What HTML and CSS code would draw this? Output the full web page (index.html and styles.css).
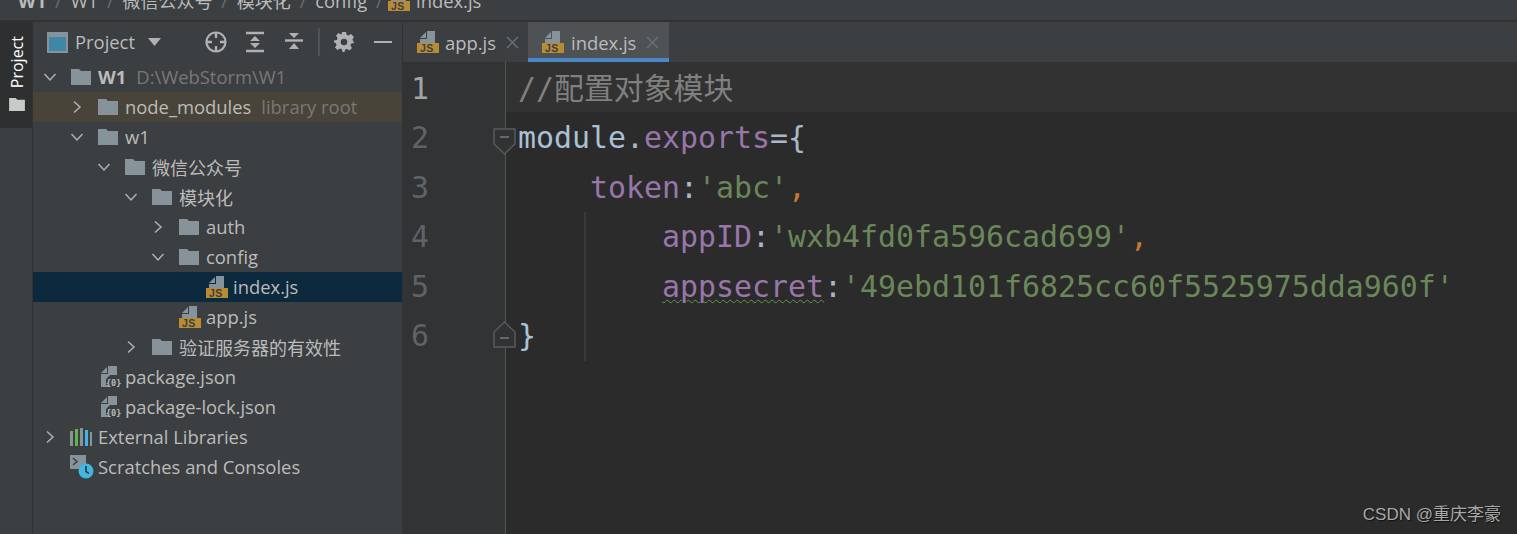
FILE: index.html
```html
<!DOCTYPE html>
<html lang="zh">
<head>
<meta charset="utf-8">
<title>WebStorm</title>
<link rel="stylesheet" href="styles.css">
</head>
<body>
<svg class="defs" width="0" height="0">
  <defs>
    <symbol id="folder" viewBox="0 0 20 16"><path d="M0 0h8l2 2h10v14H0z" fill="#87939a"/></symbol>
    <symbol id="jsfile" viewBox="0 0 22 22"><path d="M3 7l6-6v6z" fill="#87939a"/><path d="M10 0h8v12H3V8h7z" fill="#87939a"/><rect y="12" x="0" width="22" height="10" fill="#b98b35"/><text x="3" y="20.800" class="jslabel">JS</text></symbol>
    <symbol id="jsonfile" viewBox="0 0 22 24"><path d="M1 8l6-6v6z" fill="#87939a"/><path d="M8 1h9v9h-7l-4 4v6h3v2H1V9h7z" fill="#87939a"/><text x="6" y="21" class="jsonlabel">{0}</text></symbol>
    <symbol id="chev-r" viewBox="0 0 16 16"><path d="M5 2.500l6 5.500-6 5.500" fill="none" stroke="#afb1b3" stroke-width="1.500"/></symbol>
    <symbol id="chev-d" viewBox="0 0 16 16"><path d="M2.500 5l5.500 6 5.500-6" fill="none" stroke="#afb1b3" stroke-width="1.500"/></symbol>
    <symbol id="close-x" viewBox="0 0 13 13"><path d="M1 1l11 11M12 1L1 12" stroke="#6e7072" stroke-width="1.400"/></symbol>
  </defs>
</svg>

<nav class="crumbs">
  <div class="crumbs-inner">
    <b class="crumb">W1</b><i class="sep">/</i>
    <span class="crumb">W1</span><i class="sep">/</i>
    <span class="crumb cjk">微信公众号</span><i class="sep">/</i>
    <span class="crumb cjk">模块化</span><i class="sep">/</i>
    <span class="crumb">config</span><i class="sep">/</i>
    <svg class="crumb-icon"><use href="#jsfile"/></svg>
    <span class="crumb">index.js</span>
  </div>
</nav>

<main class="workspace">
  <aside class="stripe">
    <div class="stripe-tab">
      <span class="stripe-label">Project</span>
      <svg class="stripe-folder" viewBox="0 0 17 14"><path d="M0 0h7l2 2h8v12H0z" fill="#c9c9c9"/></svg>
    </div>
  </aside>

  <section class="project">
    <header class="project-head">
      <svg class="head-window" viewBox="0 0 21 21"><rect x="1" y="1" width="19" height="19" fill="#3f87a6" stroke="#87939a" stroke-width="2"/><rect x="2" y="2" width="17" height="3" fill="#87939a"/></svg>
      <span class="head-title">Project</span>
      <svg class="head-caret" viewBox="0 0 13 8"><path d="M0 0h13L6.500 8z" fill="#afb1b3"/></svg>
      <svg class="tool tool-first" viewBox="0 0 24 24"><circle cx="12" cy="12" r="9.500" fill="none" stroke="#afb1b3" stroke-width="2.200"/><path d="M12 2v6M12 16v6M2 12h6M16 12h6" stroke="#afb1b3" stroke-width="2.400"/></svg>
      <svg class="tool" viewBox="0 0 20 24"><path d="M1 3h18M1 21h18" stroke="#afb1b3" stroke-width="2.400"/><path d="M10 6l5 5H5zM10 18l5-5H5z" fill="#afb1b3"/></svg>
      <svg class="tool" viewBox="0 0 20 24"><path d="M1 10.500h18" stroke="#afb1b3" stroke-width="2.400"/><path d="M10 8L5 3h10zM10 13l5 6H5z" fill="#afb1b3"/></svg>
      <span class="head-divider"></span>
      <svg class="tool tool-gear" viewBox="0 0 20 20"><path d="M8 0h4l.6 2.800 1.900.8L17 2l3 3-1.600 2.500.8 1.900L20 10v1l-2.800.6-.8 1.900L18 16l-2.500 2.500-2.500-1.600-1.900.8L10.500 20h-2l-.6-2.800-1.900-.8L3.500 18 1 15.500l1.600-2.500-.8-1.900L0 10.500v-2l2.800-.6.800-1.900L2 3.500 4.500 1 7 2.600l.7-.3z" fill="#afb1b3"/><circle cx="10" cy="10" r="3.300" fill="#3c3f41"/></svg>
      <span class="head-minus"></span>
    </header>

    <ul class="tree">
      <li class="row l0"><svg class="chev"><use href="#chev-d"/></svg><svg class="ico"><use href="#folder"/></svg><b class="name">W1</b><span class="hint">D:\WebStorm\W1</span></li>
      <li class="row l1 lib"><svg class="chev"><use href="#chev-r"/></svg><svg class="ico"><use href="#folder"/></svg><span class="name">node_modules</span><span class="hint">library root</span></li>
      <li class="row l1"><svg class="chev"><use href="#chev-d"/></svg><svg class="ico"><use href="#folder"/></svg><span class="name">w1</span></li>
      <li class="row l2"><svg class="chev"><use href="#chev-d"/></svg><svg class="ico"><use href="#folder"/></svg><span class="name cjk">微信公众号</span></li>
      <li class="row l3"><svg class="chev"><use href="#chev-d"/></svg><svg class="ico"><use href="#folder"/></svg><span class="name cjk">模块化</span></li>
      <li class="row l4"><svg class="chev"><use href="#chev-r"/></svg><svg class="ico"><use href="#folder"/></svg><span class="name">auth</span></li>
      <li class="row l4"><svg class="chev"><use href="#chev-d"/></svg><svg class="ico"><use href="#folder"/></svg><span class="name">config</span></li>
      <li class="row l5 selected"><span class="chev"></span><svg class="file"><use href="#jsfile"/></svg><span class="name">index.js</span></li>
      <li class="row l4"><span class="chev"></span><svg class="file"><use href="#jsfile"/></svg><span class="name">app.js</span></li>
      <li class="row l3"><svg class="chev"><use href="#chev-r"/></svg><svg class="ico"><use href="#folder"/></svg><span class="name cjk">验证服务器的有效性</span></li>
      <li class="row l1"><span class="chev"></span><svg class="file json"><use href="#jsonfile"/></svg><span class="name">package.json</span></li>
      <li class="row l1"><span class="chev"></span><svg class="file json"><use href="#jsonfile"/></svg><span class="name">package-lock.json</span></li>
      <li class="row l0"><svg class="chev"><use href="#chev-r"/></svg><svg class="ico-lib" viewBox="0 0 22 18"><rect x="0" y="3" width="3" height="15" fill="#87939a"/><rect x="5" y="1" width="3" height="17" fill="#62b543"/><rect x="10" y="0" width="3" height="18" fill="#87939a"/><rect x="15" y="2" width="3" height="16" fill="#40b6e0"/><rect x="20" y="4" width="2" height="14" fill="#87939a"/></svg><span class="name">External Libraries</span></li>
      <li class="row l0"><span class="chev"></span><svg class="ico-scratch" viewBox="0 0 24 24"><path d="M0 0h16v14H0z" fill="#87939a"/><path d="M3 3l4 3.500L3 10" fill="none" stroke="#3c3f41" stroke-width="1.500"/><circle cx="16" cy="16" r="7.500" fill="#40b6e0"/><path d="M16 11v5.500l3 2" fill="none" stroke="#2b2b2b" stroke-width="1.500"/></svg><span class="name">Scratches and Consoles</span></li>
    </ul>
  </section>

  <section class="editor">
    <div class="tabs">
      <div class="tab"><svg class="tab-icon"><use href="#jsfile"/></svg><span>app.js</span><svg class="close"><use href="#close-x"/></svg></div>
      <div class="tab active"><svg class="tab-icon"><use href="#jsfile"/></svg><span>index.js</span><svg class="close"><use href="#close-x"/></svg></div>
    </div>
    <div class="code">
      <div class="line caret"><span class="num bright">1</span><code class="src"><span class="c-comment">//配置对象模块</span></code></div>
      <div class="line"><span class="num">2</span><code class="src"><span class="c-blue">module</span><span class="c-plain">.</span><span class="c-prop">exports</span><span class="c-plain">={</span></code>
        <svg class="fold fold-open" viewBox="0 0 24 28"><path d="M1 1h21v15L11.500 26 1 16z" fill="#303234" stroke="#5a5a5a" stroke-width="1.500"/><path d="M7 9h9" stroke="#7a7a7a" stroke-width="1.500"/></svg>
      </div>
      <div class="line"><span class="num">3</span><code class="src in1"><span class="c-prop">token</span><span class="c-plain">:</span><span class="c-str">'abc'</span><span class="c-kw">,</span></code></div>
      <div class="line"><span class="num">4</span><code class="src in2"><span class="guide"></span><span class="c-prop">appID</span><span class="c-plain">:</span><span class="c-str">'wxb4fd0fa596cad699'</span><span class="c-kw">,</span></code></div>
      <div class="line"><span class="num">5</span><code class="src in2"><span class="guide"></span><span class="c-prop squiggle">appsecret</span><span class="c-plain">:</span><span class="c-str">'49ebd101f6825cc60f5525975dda960f'</span></code></div>
      <div class="line"><span class="num">6</span><code class="src"><span class="guide"></span><span class="c-blue">}</span></code>
        <svg class="fold fold-close" viewBox="0 0 24 28"><path d="M1 27h21V12L11.500 2 1 12z" fill="#303234" stroke="#5a5a5a" stroke-width="1.500"/><path d="M7 18h9" stroke="#7a7a7a" stroke-width="1.500"/></svg>
      </div>
    </div>
  </section>
</main>
<div class="watermark">CSDN @重庆李豪</div>
</body>
</html>
```

FILE: styles.css
```css
* { box-sizing: border-box; }
html, body { margin: 0; height: 100%; overflow: hidden; }
body {
  background: #3c3f41;
  color: #bbbbbb;
  font-family: "Open Sans", "Noto Sans CJK SC", sans-serif;
  font-size: 18.400px;
  position: relative;
}
.defs { position: absolute; }
.jslabel { font: bold 10.500px "Liberation Sans", sans-serif; fill: #3c3f41; letter-spacing: .5px; }
.jsonlabel { font: bold 8.500px "DejaVu Sans Mono", monospace; fill: #b4bbc0; }
.cjk { font-size: 18px; }

.crumbs { height: 22px; overflow: hidden; border-bottom: 2px solid #323232; padding-left: 18px; }
.crumbs-inner { display: flex; align-items: center; height: 20px; margin-top: -10px; white-space: nowrap; }
.crumb { color: #bbbbbb; }
.sep { font-style: normal; color: #6a6d6f; margin: 0 8.800px; }
.crumb-icon { width: 22px; height: 22px; margin-left: -3.500px; margin-right: 6px; flex: none; }

.workspace { display: flex; height: 512px; }

.stripe { width: 33px; flex: none; border-right: 1px solid #323232; background: #3c3f41; }
.stripe-tab { height: 106px; width: 32px; background: #2d2f30; display: flex; flex-direction: column; align-items: center; padding: 14px 0 0 2px; }
.stripe-label { writing-mode: vertical-rl; transform: rotate(180deg); color: #ffffff; font-size: 16px; line-height: 20px; }
.stripe-folder { width: 16px; height: 13px; margin-top: 10px; }

.project { width: 370px; flex: none; border-right: 1px solid #323232; }
.project-head { height: 40px; display: flex; align-items: center; padding-left: 14px; }
.head-window { width: 21px; height: 21px; flex: none; }
.head-title { margin-left: 7px; margin-top: -2px; color: #bbbbbb; }
.head-caret { width: 13px; height: 8px; margin-left: 13px; flex: none; }
.tool { width: 24px; height: 24px; flex: none; margin-left: 15px; }
.tool-first { margin-left: 43px; }
.head-divider { width: 2px; height: 28px; background: #515455; margin-left: 12px; flex: none; }
.tool-gear { width: 20px; height: 20px; margin-left: 14px; }
.head-minus { width: 18px; height: 2px; background: #afb1b3; margin-left: 20px; flex: none; }

.tree { list-style: none; margin: 0; padding: 0; }
.row { height: 30px; display: flex; align-items: center; white-space: nowrap; }
.l0 { padding-left: 9px; }
.l1 { padding-left: 36px; }
.l2 { padding-left: 63px; }
.l3 { padding-left: 90px; }
.l4 { padding-left: 117px; }
.l5 { padding-left: 144px; }
.lib { background: #49443a; }
.selected { background: #0d293e; }
.chev { width: 16px; height: 16px; margin-right: 13px; flex: none; }
.ico { width: 20px; height: 16px; margin-right: 7px; flex: none; }
.file { width: 22px; height: 22px; margin-right: 5px; flex: none; }
.file.json { height: 24px; margin-left: 2px; margin-right: 3px; }
.ico-lib { width: 22px; height: 18px; margin-right: 6px; margin-left: -1px; flex: none; }
.ico-scratch { width: 24px; height: 24px; margin-right: 4px; margin-left: -1px; flex: none; }
.name { color: #bbbbbb; margin-top: -2px; }
.name.cjk { font-size: 18px; margin-top: 0; }
.hint { color: #787878; margin-left: 10px; margin-top: -2px; }

.editor { flex: 1; min-width: 0; display: flex; flex-direction: column; background: #2b2b2b; }
.tabs { height: 40px; display: flex; background: #3c3f41; flex: none; }
.tab { display: flex; align-items: center; height: 40px; padding-left: 14px; color: #bbbbbb; width: 125px; }
.tab.active { background: #4e5254; width: 141px; border-bottom: 4px solid #4a88c7; padding-top: 4px; }
.tab-icon { width: 22px; height: 22px; margin-right: 6px; flex: none; }
.tab.active .tab-icon { margin-right: 7px; }
.close { width: 13px; height: 13px; margin-left: 10px; flex: none; }

.code { flex: 1; background: linear-gradient(to right, #313335 102px, #555555 102px, #555555 103px, transparent 103px); }
.line { height: 49.500px; padding-top: 3px; display: flex; align-items: center; position: relative; }
.line.caret { background: linear-gradient(to right, transparent 103px, #323232 103px); }
.num { width: 103px; padding-left: 8px; flex: none; color: #606366; font: 29.900px "DejaVu Sans Mono", monospace; }
.num.bright { color: #a4a3a3; }
.src { position: relative; margin-left: 12px; display: block; height: 49.500px; font: 29.900px/49.500px "DejaVu Sans Mono", monospace; white-space: pre; }
.in1 { margin-left: 84px; }
.in2 { margin-left: 156px; }
.guide { position: absolute; left: -78px; top: 0; bottom: 0; width: 2px; background: #393939; }
.src:not(.in1):not(.in2) .guide { left: 66px; }
.c-comment { color: #808080; font-family: "DejaVu Sans Mono", "Noto Sans CJK SC", monospace; }
.c-blue { color: #a9c1d6; }
.c-plain { color: #a9b7c6; }
.c-prop { color: #9876aa; }
.c-str { color: #6a8759; }
.c-kw { color: #cc7832; }
.squiggle { text-decoration: underline wavy #62964d 1px; text-underline-offset: 2px; }
.fold { position: absolute; width: 24px; height: 28px; left: 90px; }
.fold-open { top: 16px; }
.fold-close { top: 10.500px; }

.watermark {
  position: absolute; right: 16px; bottom: 9px;
  font: 17px "Liberation Sans", "Noto Sans CJK SC", sans-serif;
  color: #a8a8a8; text-shadow: 1px 1px 1px #111;
}
```
